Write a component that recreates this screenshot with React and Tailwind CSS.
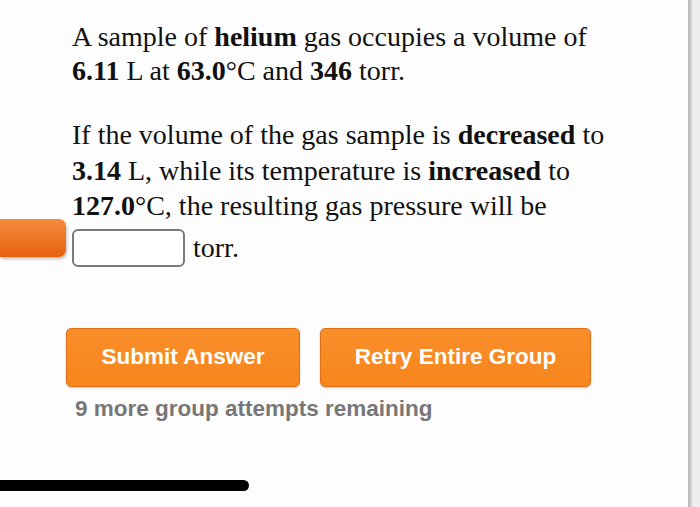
export default function App() {
  return (
    <div className="relative flex h-[507px] w-[700px] overflow-hidden bg-[#fdfdfd]">
      {/* main column */}
      <div className="flex w-[688px] flex-col">
        <div
          className="pl-[72px] pt-[20px] text-[28px] leading-[34px] text-[#111]"
          style={{ fontFamily: '"Liberation Serif", "Times New Roman", serif' }}
        >
          <p className="whitespace-nowrap">
            A sample of <b>helium</b> gas occupies a volume of
            <br />
            <b>6.11</b> L at <b>63.0</b>°C and <b>346</b> torr.
          </p>
          <p className="mt-[29px] whitespace-nowrap leading-[35.5px]">
            If the volume of the gas sample is <b>decreased</b> to
            <br />
            <b>3.14</b> L, while its temperature is <b>increased</b> to
            <br />
            <b>127.0</b>°C, the resulting gas pressure will be
          </p>
          <div className="relative mt-[5px] flex items-center gap-[8px]">
            <div className="h-[38px] w-[113px] rounded-[6px] border-[2px] border-[#7a7a7a] bg-white" />
            <span>torr.</span>
            {/* side tab */}
            <div className="absolute left-[-72px] top-[-10px] h-[38px] w-[66px] rounded-r-[7px] bg-gradient-to-b from-[#f5893a] to-[#e7620a] shadow-[1px_2px_3px_rgba(0,0,0,0.25)]" />
          </div>
        </div>

        <div
          className="mt-[61px] flex gap-[20px] pl-[66px]"
          style={{ fontFamily: '"Liberation Sans", Arial, sans-serif' }}
        >
          <button className="flex h-[59px] w-[234px] items-center justify-center rounded-[5px] border border-[#e0701a] bg-gradient-to-b from-[#f98e2a] to-[#f7861c] text-[22.5px] font-bold text-white shadow-[0_1px_2px_rgba(0,0,0,0.2)]">
            Submit Answer
          </button>
          <button className="flex h-[59px] w-[271px] items-center justify-center rounded-[5px] border border-[#e0701a] bg-gradient-to-b from-[#f98e2a] to-[#f7861c] text-[22.5px] font-bold text-white shadow-[0_1px_2px_rgba(0,0,0,0.2)]">
            Retry Entire Group
          </button>
        </div>

        <div
          className="mt-[8px] pl-[75px] text-[22.5px] font-bold leading-[28px] text-[#777]"
          style={{ fontFamily: '"Liberation Sans", Arial, sans-serif' }}
        >
          9 more group attempts remaining
        </div>

        <div className="mt-[57px] h-[11px] w-[249px] rounded-r-full bg-black" />
      </div>

      {/* right scroll edge */}
      <div className="flex h-full flex-1">
        <div className="w-[4px] bg-gradient-to-r from-[#b8b8b8] to-[#d8d8d8]" />
        <div className="flex-1 bg-[#eeeeee]" />
      </div>
    </div>
  );
}
